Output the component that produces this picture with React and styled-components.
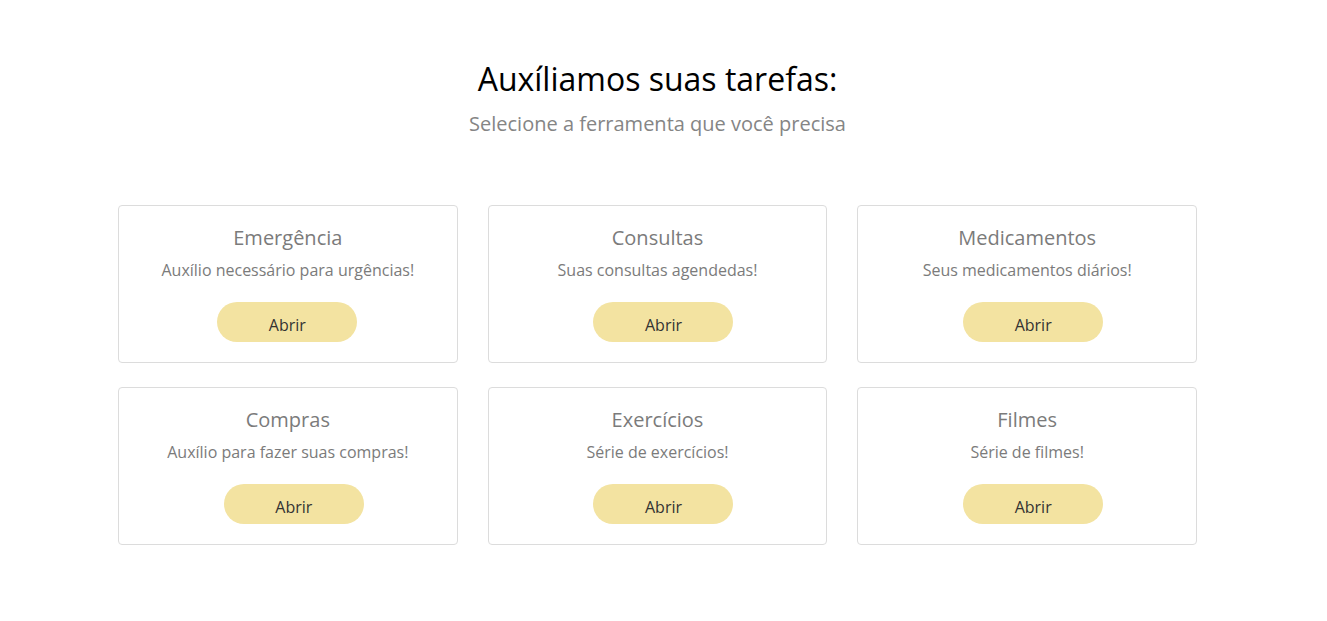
import React from "react";
import styled, { createGlobalStyle } from "styled-components";

const Global = createGlobalStyle`
  html, body { margin: 0; padding: 0; background: #fff; }
  body { font-family: "Open Sans", "Noto Sans", sans-serif; }
  * { box-sizing: border-box; }
`;

const Page = styled.main`
  width: 1315px;
  padding-top: 60px;
  display: flex;
  flex-direction: column;
  align-items: center;
`;

const Header = styled.header`
  display: flex;
  flex-direction: column;
  align-items: center;
  gap: 11px;
`;

const Title = styled.h1`
  margin: 0;
  font-size: 32px;
  line-height: 38.4px;
  font-weight: 400;
  color: #000;
`;

const Subtitle = styled.p`
  margin: 0;
  font-size: 20px;
  line-height: 30px;
  color: #858585;
`;

const Grid = styled.section`
  margin-top: 66px;
  width: 1079px;
  display: grid;
  grid-template-columns: repeat(3, 1fr);
  column-gap: 30px;
  row-gap: 24px;
`;

const Card = styled.article`
  border: 1px solid #dcdcdc;
  border-radius: 4px;
  padding: 20px 20px 20px;
  display: flex;
  flex-direction: column;
  align-items: center;
  text-align: center;
`;

const CardTitle = styled.h2`
  margin: 0 0 8px;
  font-size: 20px;
  line-height: 24px;
  font-weight: 400;
  color: #7b7b7b;
`;

const CardText = styled.p`
  margin: 0 0 20px;
  font-size: 16px;
  line-height: 24px;
  color: #7b7b7b;
`;

const OpenButton = styled.button`
  width: 140px;
  height: 40px;
  margin-left: ${(p) => p.$shift}px;
  border: none;
  border-radius: 20px;
  background: #f3e3a1;
  color: #333;
  font-family: inherit;
  font-size: 16px;
  line-height: 24px;
  padding: 6px 0 0;
  cursor: pointer;
`;

const tools = [
  { title: "Emergência", text: "Auxílio necessário para urgências!", shift: -1 },
  { title: "Consultas", text: "Suas consultas agendedas!", shift: 12 },
  { title: "Medicamentos", text: "Seus medicamentos diários!", shift: 12 },
  { title: "Compras", text: "Auxílio para fazer suas compras!", shift: 12 },
  { title: "Exercícios", text: "Série de exercícios!", shift: 12 },
  { title: "Filmes", text: "Série de filmes!", shift: 12 },
];

export default function App() {
  return (
    <>
      <Global />
      <Page>
        <Header>
          <Title>Auxíliamos suas tarefas:</Title>
          <Subtitle>Selecione a ferramenta que você precisa</Subtitle>
        </Header>
        <Grid>
          {tools.map((t) => (
            <Card key={t.title}>
              <CardTitle>{t.title}</CardTitle>
              <CardText>{t.text}</CardText>
              <OpenButton $shift={t.shift}>Abrir</OpenButton>
            </Card>
          ))}
        </Grid>
      </Page>
    </>
  );
}
